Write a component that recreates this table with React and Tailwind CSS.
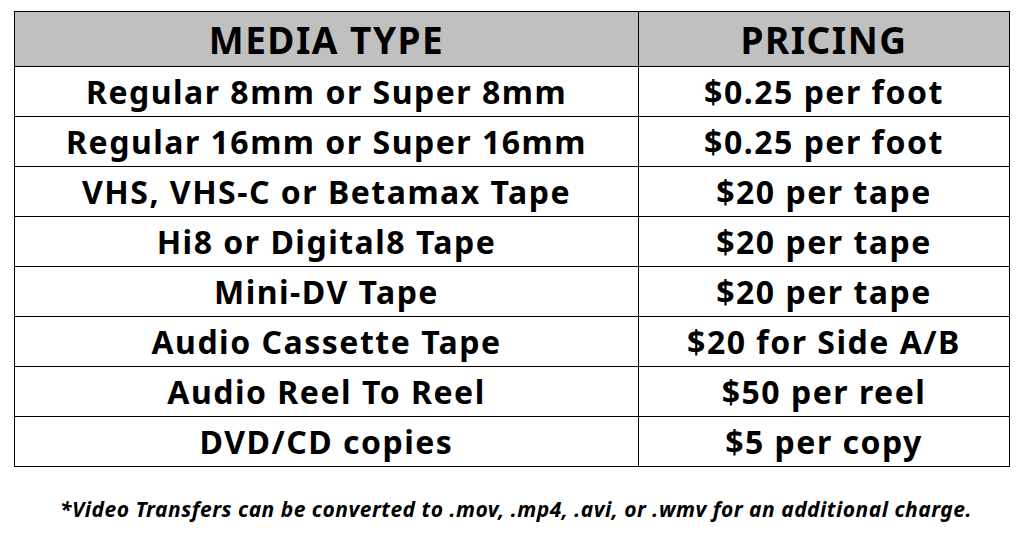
import React from "react";

const rows = [
  ["Regular 8mm or Super 8mm", "$0.25 per foot"],
  ["Regular 16mm or Super 16mm", "$0.25 per foot"],
  ["VHS, VHS-C or Betamax Tape", "$20 per tape"],
  ["Hi8 or Digital8 Tape", "$20 per tape"],
  ["Mini-DV Tape", "$20 per tape"],
  ["Audio Cassette Tape", "$20 for Side A/B"],
  ["Audio Reel To Reel", "$50 per reel"],
  ["DVD/CD copies", "$5 per copy"],
];

export default function App() {
  return (
    <div
      className="w-[1024px] h-[538px] bg-white text-black overflow-hidden"
      style={{ fontFamily: "'Noto Sans', Lato, sans-serif" }}
    >
      <div className="pt-[11px] pl-[14px]">
        <table className="border-collapse w-[995px] table-fixed">
          <colgroup>
            <col className="w-[624px]" />
            <col className="w-[371px]" />
          </colgroup>
          <thead>
            <tr className="bg-[#c0c0c0] h-[55px]">
              <th className="border border-black text-[37px] font-bold leading-none tracking-[1.5px] text-center align-middle">
                MEDIA TYPE
              </th>
              <th className="border border-black text-[37px] font-bold leading-none tracking-[1.5px] text-center align-middle">
                PRICING
              </th>
            </tr>
          </thead>
          <tbody>
            {rows.map(([a, b]) => (
              <tr key={a} className="h-[50px]">
                <td className="border border-black text-[32px] font-bold leading-none tracking-[1.5px] text-center align-middle">
                  {a}
                </td>
                <td className="border border-black text-[32px] font-bold leading-none tracking-[1.5px] text-center align-middle">
                  {b}
                </td>
              </tr>
            ))}
          </tbody>
        </table>
      </div>
      <p className="mt-[32px] text-center text-[21px] font-bold italic leading-none tracking-[0.5px] pl-[8px]">
        *Video Transfers can be converted to .mov, .mp4, .avi, or .wmv for an additional charge.
      </p>
    </div>
  );
}
